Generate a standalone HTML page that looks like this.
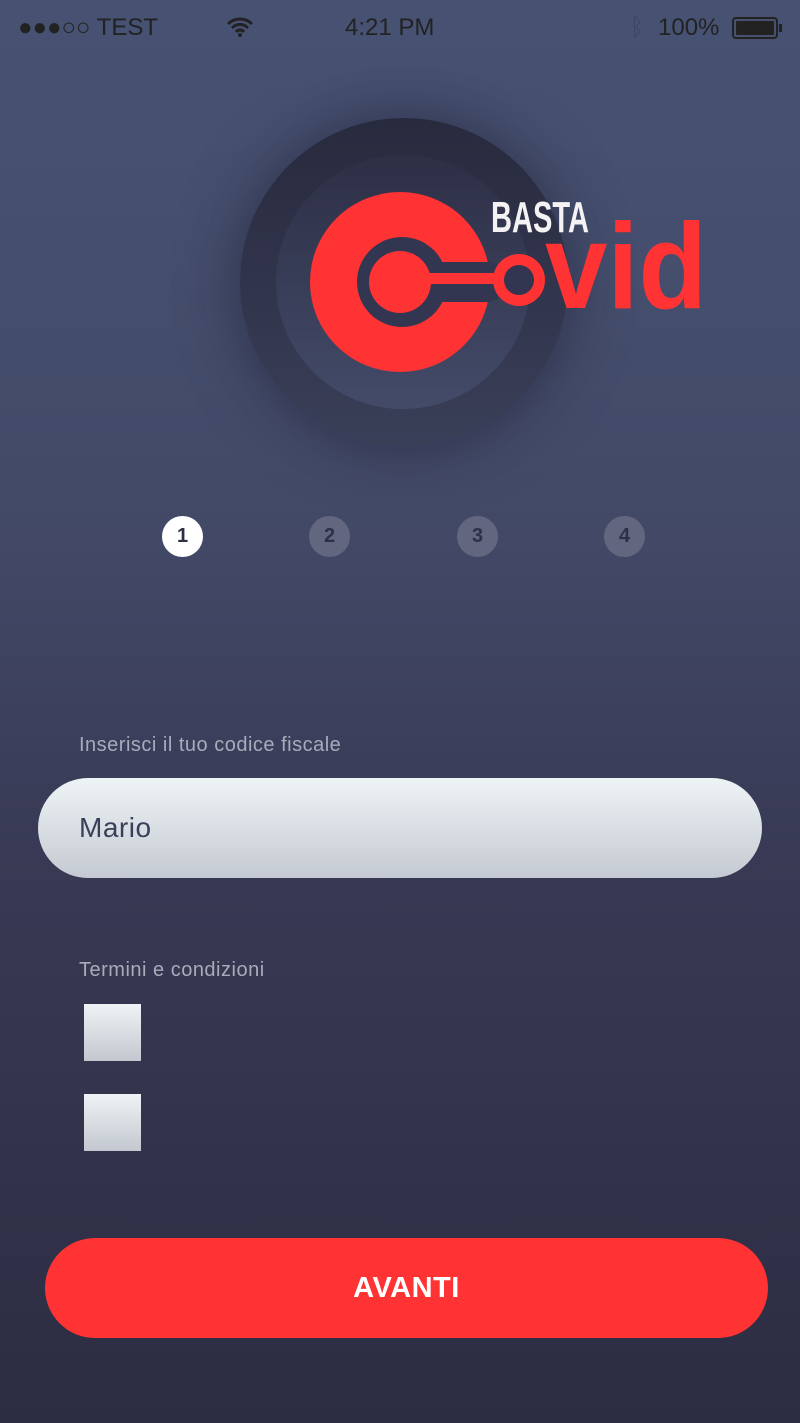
<!DOCTYPE html>
<html><head><meta charset="utf-8"><style>
*{margin:0;padding:0;box-sizing:border-box}
body{width:800px;height:1423px;overflow:hidden;font-family:"Liberation Sans",sans-serif;background:linear-gradient(#475273 0%,#434a68 35%,#383a55 60%,#2c2d42 100%);position:relative}
.abs{position:absolute}
.sb{top:14px;font-size:24px;color:#222}
.step{position:absolute;top:516px;width:41px;height:41px;border-radius:50%;background:#63667f;color:#2e3046;font-weight:bold;font-size:20px;text-align:center;line-height:41px}
.lbl{left:79px;font-size:20px;color:#a9abbb;letter-spacing:.5px}
.cb{left:84px;width:57px;height:57px;background:linear-gradient(#eef3f5,#c3c8d0)}
</style></head><body>
<div class="abs sb" style="left:18px">●●●○○ TEST</div>
<svg class="abs" style="left:226px;top:16px" width="28" height="22" viewBox="0 0 28 22"><path d="M2 8 A17 17 0 0 1 26 8 M6 12 A11 11 0 0 1 22 12 M10 16 A5 5 0 0 1 18 16" stroke="#222" stroke-width="3" fill="none"/><circle cx="14" cy="19" r="2" fill="#222"/></svg>
<div class="abs sb" style="left:345px">4:21 PM</div>
<div class="abs sb" style="left:630px;color:#3d4460">ᛒ</div>
<div class="abs sb" style="left:658px">100%</div>
<div class="abs" style="left:732px;top:17px;width:46px;height:22px;border:2px solid #222;border-radius:4px;padding:2px"><div style="width:100%;height:100%;background:#222;border-radius:1px"></div></div>
<div class="abs" style="left:779px;top:24px;width:3px;height:8px;background:#222"></div>

<div class="abs" style="left:240px;top:118px;width:328px;height:328px;border-radius:50%;background:linear-gradient(#282a3e,#3a3f58);box-shadow:0 0 60px rgba(20,20,35,.5)"></div>
<div class="abs" style="left:276px;top:155px;width:254px;height:254px;border-radius:50%;background:linear-gradient(#2d2f45,#434b69)"></div>
<svg class="abs" style="left:0;top:0" width="800" height="460">
<circle cx="400" cy="282" r="90" fill="#ff3333"/>
<circle cx="402" cy="282" r="45" fill="#323651"/>
<rect x="420" y="262" width="85" height="40" rx="18" fill="#323651"/>
<circle cx="400" cy="282" r="31" fill="#ff3333"/>
<rect x="420" y="273" width="80" height="11" fill="#ff3333"/>
<circle cx="519" cy="280" r="26" fill="#ff3333"/>
<circle cx="519" cy="280" r="15" fill="#323651"/>
<text x="491" y="232" font-family="Liberation Sans Narrow, Liberation Sans, sans-serif" font-weight="bold" font-size="44" fill="#f4f2f2" textLength="98" lengthAdjust="spacingAndGlyphs">BASTA</text>
<text x="545" y="308" font-family="Liberation Sans, sans-serif" font-weight="bold" font-size="122" fill="#ff3333" textLength="162" lengthAdjust="spacingAndGlyphs">vid</text>
</svg>

<div class="step" style="left:162px;background:#fff;color:#2e3046">1</div>
<div class="step" style="left:309px">2</div>
<div class="step" style="left:457px">3</div>
<div class="step" style="left:604px">4</div>

<div class="abs lbl" style="top:734px">Inserisci il tuo codice fiscale</div>
<div class="abs" style="left:38px;top:778px;width:724px;height:100px;border-radius:50px;background:linear-gradient(#eef4f6,#c5cad2)"></div>
<div class="abs" style="left:79px;top:812px;font-size:28px;color:#3c3f5a;letter-spacing:.5px">Mario</div>
<div class="abs lbl" style="top:959px">Termini e condizioni</div>
<div class="abs cb" style="top:1004px"></div>
<div class="abs cb" style="top:1094px"></div>
<div class="abs" style="left:45px;top:1238px;width:723px;height:100px;border-radius:50px;background:#ff3333;color:#fff;font-weight:bold;font-size:29px;text-align:center;line-height:100px;letter-spacing:.5px">AVANTI</div>
</body></html>
